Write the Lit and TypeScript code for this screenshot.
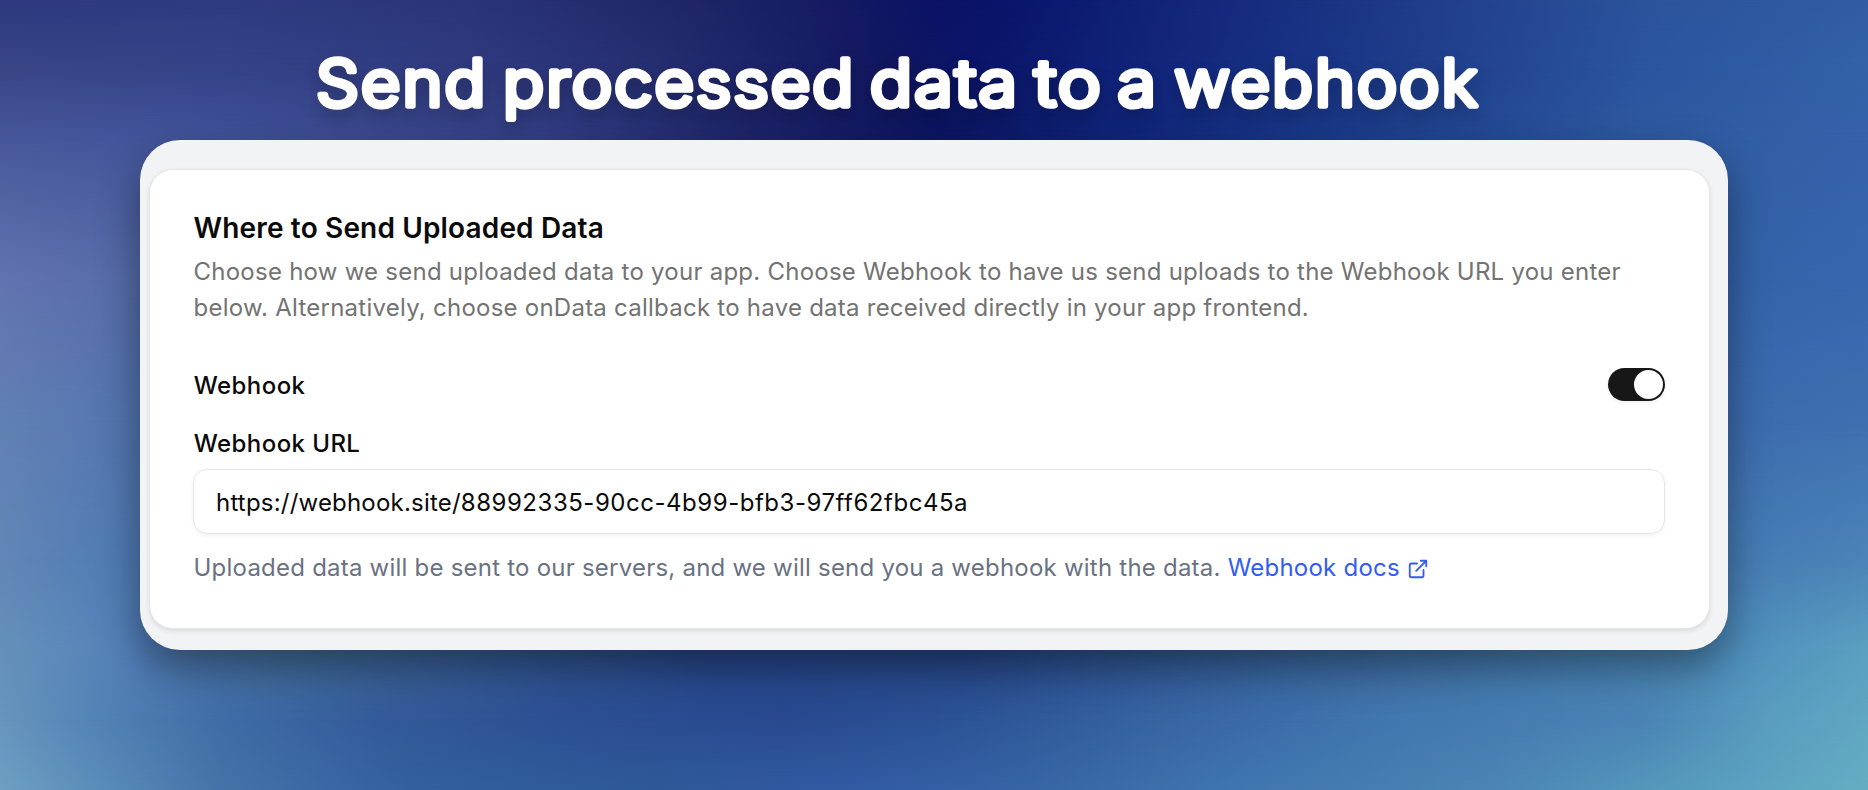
import { LitElement, html, css, svg } from "lit";
import { customElement, state } from "lit/decorators.js";
import { styleMap } from "lit/directives/style-map.js";

/** Colour rows of the backdrop mesh: [y, horizontal stops]. Each row fades into the next. */
const MESH: [number, string][] = [
  [0, "#2d397e 0%, #2f3b80 12%, #2a3579 25%, #1f2568 37%, #151a62 45%, #0c1265 50%, #09156b 54%, #112479 62%, #1f3a88 75%, #2b539c 88%, #315da4 100%"],
  [70, "#3a4688 0%, #354388 12%, #303b80 25%, #262f72 35%, #12175f 47%, #0b1568 52%, #10247a 61%, #1f3d8c 76%, #2b559f 88%, #3362a8 100%"],
  [140, "#48589b 0%, #42549a 10%, #3c4a90 20%, #333f85 29%, #1e2469 40%, #0c1560 50%, #10257a 60%, #1f418f 75%, #2f5aa0 88%, #3562aa 100%"],
  [280, "#6274b1 0%, #5a6eab 5%, #5069a5 9%, #3362a8 91%, #3866ae 100%"],
  [420, "#6180b2 0%, #5b7ab3 4%, #4c6fab 9%, #3a6aad 91%, #406fb0 100%"],
  [560, "#6287b6 0%, #5680b6 4%, #4a76b0 9%, #4479b2 91%, #4c84b8 100%"],
  [650, "#6590ba 0%, #5b88b9 4%, #4f7bb5 8%, #44709f 15%, #27478c 38%, #27478c 52%, #3a68a0 70%, #4f8fbd 93%, #5ba0c0 100%"],
  [720, "#6795bd 0%, #5483b6 5%, #3f6ca6 12%, #345b99 20%, #2b4f93 30%, #29498f 42%, #2a5194 50%, #3764a2 62%, #4377af 75%, #4a83b5 88%, #5a9ebf 95%, #60a7c2 100%"],
  [790, "#6e9fc2 0%, #5b8eb9 5%, #4472a8 12%, #33609f 22%, #2e5998 35%, #325ba3 45%, #3765a5 55%, #4074ae 65%, #4c85b5 80%, #579bbc 90%, #64adc4 100%"],
];

/** Headline words: [text, left, width]. */
const HEADLINE: [string, number, number][] = [
  ["Send", 316, 171.5],
  ["processed", 503, 352.5],
  ["data", 870, 149],
  ["to", 1034.5, 68.5],
  ["a", 1117.5, 40.5],
  ["webhook", 1174.5, 305],
];

@customElement("mesh-backdrop")
class MeshBackdrop extends LitElement {
  static styles = css`
    :host { display: block; position: absolute; inset: 0; overflow: hidden; }
    .row { position: absolute; inset: 0; }
  `;
  render() {
    return MESH.map(([y, stops], i) => {
      const mask = i ? `linear-gradient(to bottom, transparent ${MESH[i - 1][0]}px, #000 ${y}px)` : "none";
      return html`<div class="row" style=${styleMap({ background: `linear-gradient(to right, ${stops})`, maskImage: mask })}></div>`;
    });
  }
}

@customElement("toggle-switch")
class ToggleSwitch extends LitElement {
  @state() on = true;
  static styles = css`
    :host { display: block; }
    .track {
      display: flex; align-items: center; justify-content: flex-end;
      box-sizing: border-box; width: 57px; height: 33px; padding: 2px;
      border: 0; border-radius: 17px; background: #171717;
      box-shadow: 0 2px 4px rgba(0, 0, 0, 0.06);
    }
    .off { justify-content: flex-start; background: #e5e5e5; }
    .knob { width: 29px; height: 29px; border-radius: 50%; background: #fff; }
  `;
  render() {
    return html`<button class="track ${this.on ? "" : "off"}" role="switch" aria-checked=${this.on}
      aria-label="Webhook" @click=${() => (this.on = !this.on)}><span class="knob"></span></button>`;
  }
}

@customElement("app-root")
class AppRoot extends LitElement {
  static styles = css`
    :host {
      display: block; position: relative; height: 790px; overflow: hidden;
      font-family: Inter, "Noto Sans", sans-serif; color: #0a0a0a;
    }
    .page { position: relative; display: flex; flex-direction: column; height: 100%; }
    .headline { display: block; width: 1868px; height: 140px; overflow: visible; }
    .headline text {
      font-size: 64px; font-weight: 300; letter-spacing: 2px; fill: #fff;
      stroke: #fff; stroke-width: 5.6px; stroke-linejoin: round; stroke-linecap: round;
    }
    .shade { filter: drop-shadow(0 8px 8px rgba(0, 0, 0, 0.22)); }
    .frame {
      box-sizing: border-box; width: 1588px; height: 510px; margin-left: 140px;
      padding: 29px 18px 21px 9px; border-radius: 40px; background: #f2f3f5;
      box-shadow: 0 18px 40px rgba(0, 0, 0, 0.4);
    }
    .card {
      box-sizing: border-box; height: 460px; padding: 44px 44px 0 43px;
      border: 1px solid #e5e5e5; border-radius: 24px; background: #fff;
      box-shadow: 0 2px 5px rgba(0, 0, 0, 0.1);
      font-size: 24px; line-height: 36px; white-space: nowrap;
    }
    h2 { margin: 0 0 12px; padding-left: 0.6px; font-size: 28px; line-height: 28px; font-weight: 600; letter-spacing: 0.15px; }
    .lead { margin: 0; padding-left: 0.5px; color: #737373; letter-spacing: 0.245px; }
    .toggle-row { display: flex; justify-content: space-between; align-items: center; height: 33px; margin-top: 42px; }
    .label { display: block; padding: 2px 0 0 0.8px; font-weight: 500; letter-spacing: 0.42px; line-height: 24px; }
    .url-label { margin-top: 29px; }
    .field {
      display: flex; align-items: center; box-sizing: border-box; height: 65px; margin-top: 13px;
      padding: 2px 22px 0; border: 1px solid #e5e5e5; border-radius: 14px;
      box-shadow: 0 2px 4px rgba(0, 0, 0, 0.05);
    }
    .host { letter-spacing: 0.2px; }
    .token { letter-spacing: 0.53px; }
    .hint { display: flex; align-items: center; margin-top: 16px; padding-left: 0.5px; color: #6a7282; letter-spacing: 0.225px; }
    .link { display: flex; align-items: center; gap: 7px; margin-left: 7px; color: #325cf5; text-decoration: none; }
    .link svg { display: block; width: 22px; height: 22px; margin-top: 2px; }
  `;

  render() {
    return html`
      <mesh-backdrop></mesh-backdrop>
      <main class="page">
        <svg class="headline" viewBox="0 0 1868 140" role="heading" aria-level="1">
          <g class="shade">
            ${HEADLINE.map(([word, x, w]) => svg`<text x=${x} y="105.7" textLength=${w} lengthAdjust="spacingAndGlyphs">${word}</text>`)}
          </g>
        </svg>
        <div class="frame">
          <section class="card">
            <h2>Where to Send Uploaded Data</h2>
            <p class="lead">Choose how we send uploaded data to your app. Choose Webhook to have us send uploads to the Webhook URL you enter<br>below. Alternatively, choose onData callback to have data received directly in your app frontend.</p>
            <div class="toggle-row"><span class="label">Webhook</span><toggle-switch></toggle-switch></div>
            <span class="label url-label">Webhook URL</span>
            <div class="field"><span class="host">https://webhook.site/</span><span class="token">88992335-90cc-4b99-bfb3-97ff62fbc45a</span></div>
            <div class="hint">
              <span>Uploaded data will be sent to our servers, and we will send you a webhook with the data.</span>
              <a class="link"><span>Webhook docs</span>
                <svg viewBox="0 0 24 24" fill="none" stroke="currentColor" stroke-width="2" stroke-linecap="round" stroke-linejoin="round">
                  <path d="M15 3h6v6M10 14 21 3M18 13v6a2 2 0 0 1-2 2H5a2 2 0 0 1-2-2V8a2 2 0 0 1 2-2h6" />
                </svg>
              </a>
            </div>
          </section>
        </div>
      </main>`;
  }
}
